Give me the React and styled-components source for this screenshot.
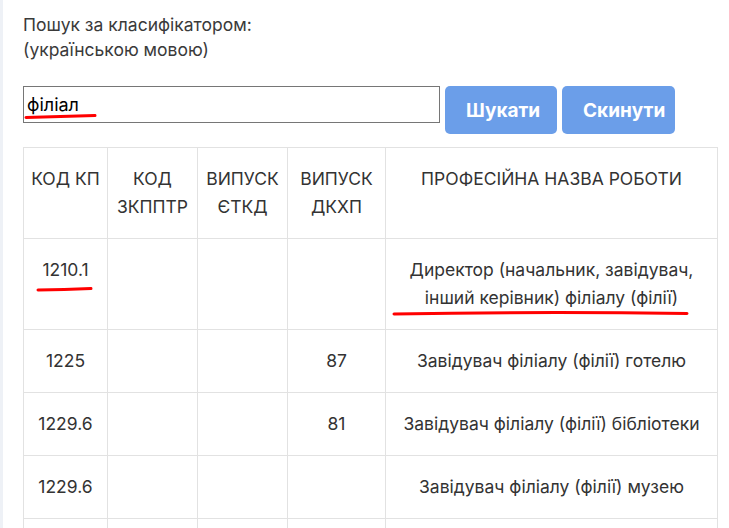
import React from 'react'
import styled, { createGlobalStyle } from 'styled-components'

const GlobalStyle = createGlobalStyle`
  html, body {
    margin: 0;
    padding: 0;
    background: #fff;
  }
  body {
    font-family: Inter, "Noto Sans", sans-serif;
    color: #333;
  }
`;

const Page = styled.div`
  min-height: 528px;
  box-sizing: border-box;
  border-left: 3px solid #eef1f6;
  padding: 12px 12px 0 20px;
`;

const Label = styled.div`
  font-size: 17.5px;
  line-height: 25px;
  color: #3a3a3a;
`;

const SearchRow = styled.div`
  display: flex;
  align-items: flex-start;
  gap: 5px;
  margin-top: 24px;
`;

const InputWrap = styled.div`
  position: relative;
  width: 417px;
  height: 37px;
`;

const Input = styled.input`
  width: 100%;
  height: 100%;
  box-sizing: border-box;
  border: 1px solid #767676;
  border-radius: 0;
  padding: 0 3px;
  font-family: Inter, "Noto Sans", sans-serif;
  font-size: 18px;
  color: #000;
  outline: none;
`;

const Button = styled.button`
  width: ${p => p.$width}px;
  height: 48px;
  box-sizing: border-box;
  border: none;
  border-radius: 5px;
  background: #6b9ee9;
  color: #fff;
  font-family: Inter, "Noto Sans", sans-serif;
  font-size: 19px;
  font-weight: 700;
  text-align: left;
  padding: 0 0 0 21px;
  white-space: nowrap;
  cursor: pointer;
`;

const Table = styled.table`
  margin-top: 13px;
  width: 695px;
  border-collapse: collapse;
  table-layout: fixed;
  font-size: 17.5px;
  line-height: 28px;
  color: #333;
`;

const Th = styled.th`
  font-weight: 400;
  text-transform: uppercase;
  text-align: center;
  vertical-align: top;
  padding: 17px 4px;
  border: 1px solid #e2e2e2;
  height: 56px;
`;

const Td = styled.td`
  position: relative;
  text-align: center;
  vertical-align: top;
  padding: 17px 4px;
  height: 28px;
  border: 1px solid #e2e2e2;
`;

const Mark = styled.svg`
  position: absolute;
  left: ${p => p.$left}px;
  top: ${p => p.$top}px;
  overflow: visible;
  pointer-events: none;
`;

// hand-drawn red underline
function Scribble({ left, top, width, path }) {
  return (
    <Mark $left={left} $top={top} width={width} height="6">
      <path d={path} fill="none" stroke="#f00" strokeWidth="3" strokeLinecap="round" />
    </Mark>
  )
}

const rows = [
  {
    code: '1210.1',
    dkhp: '',
    name: 'Директор (начальник, завідувач, інший керівник) філіалу (філії)',
    marked: true,
  },
  { code: '1225', dkhp: '87', name: 'Завідувач філіалу (філії) готелю' },
  { code: '1229.6', dkhp: '81', name: 'Завідувач філіалу (філії) бібліотеки' },
  { code: '1229.6', dkhp: '', name: 'Завідувач філіалу (філії) музею' },
  { code: '', dkhp: '', name: '' },
];

export default function App() {
  return (
    <>
      <GlobalStyle />
      <Page>
        <Label>
          Пошук за класифікатором:
          <br />
          (українською мовою)
        </Label>

        <SearchRow>
          <InputWrap>
            <Input defaultValue="філіал" />
            <Scribble left={3} top={28} width={69} path="M0 3.5 Q30 2.5 69 1.5" />
          </InputWrap>
          <Button $width={112}>Шукати</Button>
          <Button $width={113}>Скинути</Button>
        </SearchRow>

        <Table>
          <colgroup>
            <col style={{ width: 84 }} />
            <col style={{ width: 90 }} />
            <col style={{ width: 90 }} />
            <col style={{ width: 98 }} />
            <col />
          </colgroup>
          <thead>
            <tr>
              <Th>Код КП</Th>
              <Th>Код ЗКППТР</Th>
              <Th>Випуск ЄТКД</Th>
              <Th>Випуск ДКХП</Th>
              <Th>Професійна назва роботи</Th>
            </tr>
          </thead>
          <tbody>
            {rows.map((r, i) => (
              <tr key={i}>
                <Td>
                  {r.code}
                  {r.marked && (
                    <Scribble left={14} top={48} width={53} path="M0 3 Q26 2.5 53 1.5" />
                  )}
                </Td>
                <Td />
                <Td />
                <Td>{r.dkhp}</Td>
                <Td>
                  {r.name}
                  {r.marked && (
                    <Scribble left={8} top={72} width={293} path="M0 3 Q146 0.5 293 2.5" />
                  )}
                </Td>
              </tr>
            ))}
          </tbody>
        </Table>
      </Page>
    </>
  )
}
